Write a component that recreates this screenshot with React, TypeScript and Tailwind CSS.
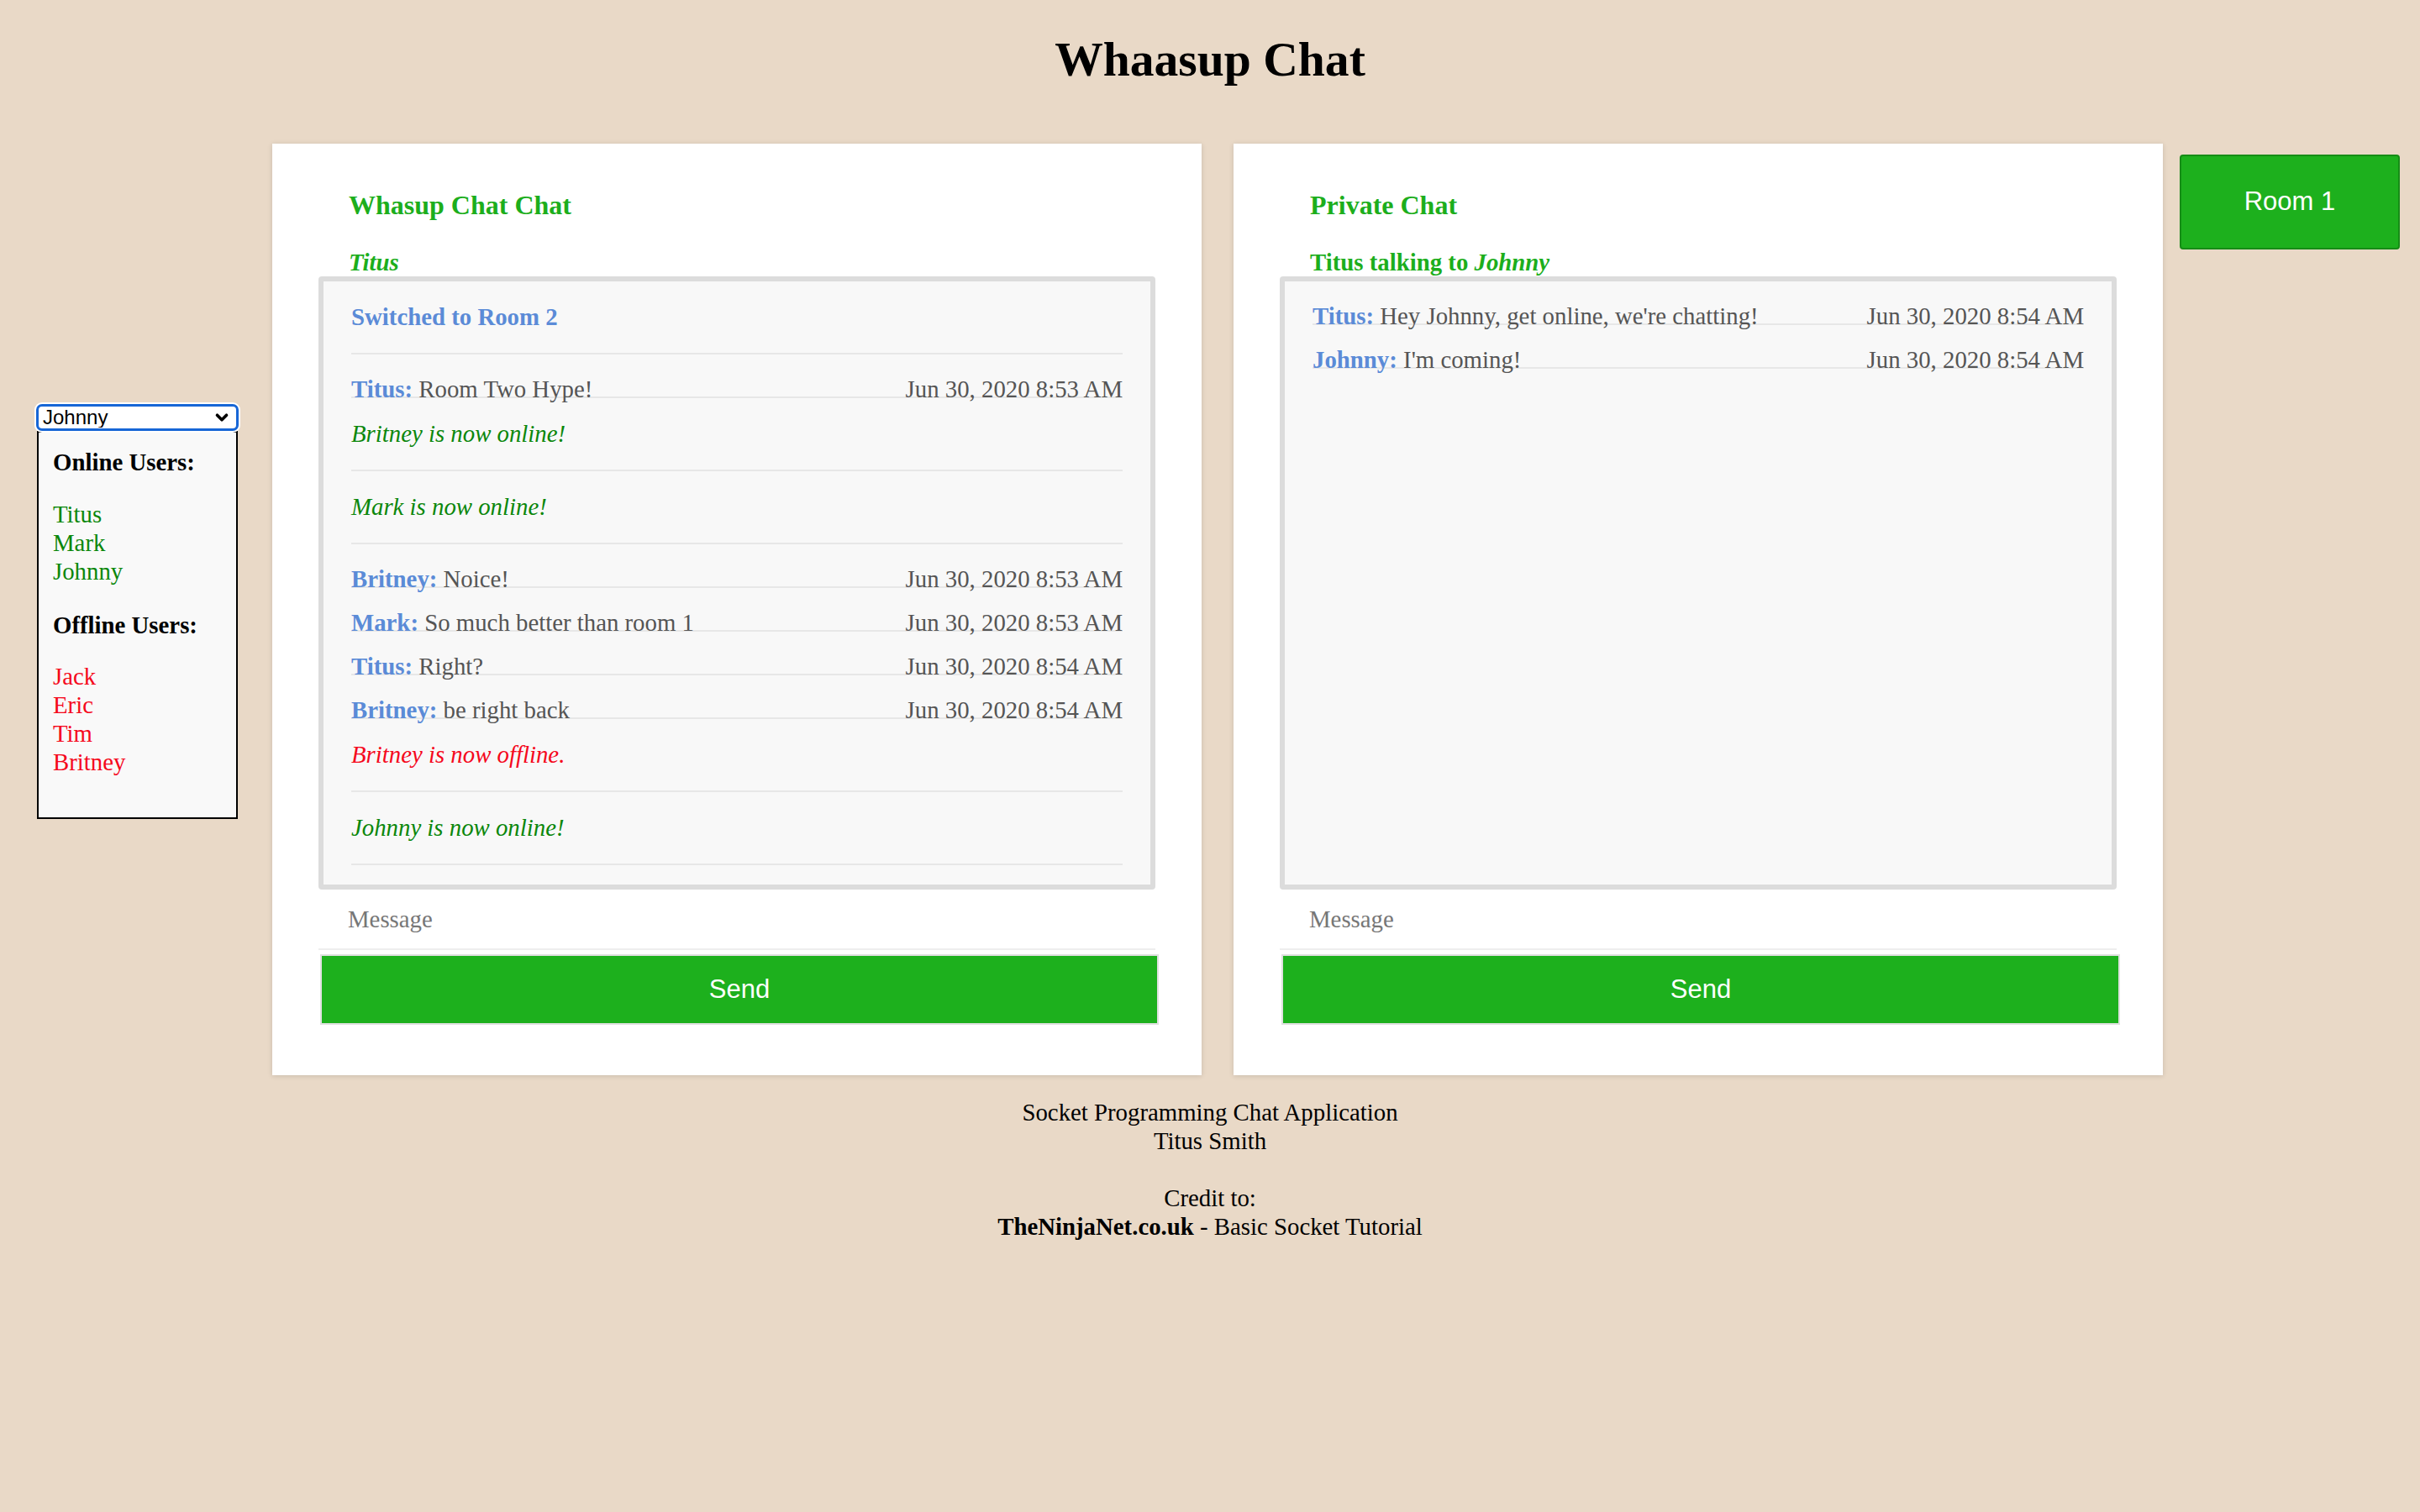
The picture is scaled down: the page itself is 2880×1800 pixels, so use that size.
import { ChevronDown } from 'lucide-react'

type Item =
  | { kind: 'msg'; name: string; text: string; time: string }
  | { kind: 'sys'; text: string; tone: 'online' | 'offline' | 'room' }

const room2: Item[] = [
  { kind: 'sys', text: 'Switched to Room 2', tone: 'room' },
  { kind: 'msg', name: 'Titus', text: 'Room Two Hype!', time: 'Jun 30, 2020 8:53 AM' },
  { kind: 'sys', text: 'Britney is now online!', tone: 'online' },
  { kind: 'sys', text: 'Mark is now online!', tone: 'online' },
  { kind: 'msg', name: 'Britney', text: 'Noice!', time: 'Jun 30, 2020 8:53 AM' },
  { kind: 'msg', name: 'Mark', text: 'So much better than room 1', time: 'Jun 30, 2020 8:53 AM' },
  { kind: 'msg', name: 'Titus', text: 'Right?', time: 'Jun 30, 2020 8:54 AM' },
  { kind: 'msg', name: 'Britney', text: 'be right back', time: 'Jun 30, 2020 8:54 AM' },
  { kind: 'sys', text: 'Britney is now offline.', tone: 'offline' },
  { kind: 'sys', text: 'Johnny is now online!', tone: 'online' },
]

const privateChat: Item[] = [
  { kind: 'msg', name: 'Titus', text: "Hey Johnny, get online, we're chatting!", time: 'Jun 30, 2020 8:54 AM' },
  { kind: 'msg', name: 'Johnny', text: "I'm coming!", time: 'Jun 30, 2020 8:54 AM' },
]

const online = ['Titus', 'Mark', 'Johnny']
const offline = ['Jack', 'Eric', 'Tim', 'Britney']

function Row({ item }: { item: Item }) {
  if (item.kind === 'msg') {
    return (
      <div className="pt-[31px]">
        <div className="flex justify-between leading-[19px] border-b-2 border-[#e7e7e7] text-[#555555]">
          <span className="relative top-[1px] whitespace-nowrap">
            <b className="text-[#5b8bd7]">{item.name}:</b> {item.text}
          </span>
          <span className="relative top-[1px] whitespace-nowrap">{item.time}</span>
        </div>
      </div>
    )
  }
  // system notices get their own divider underneath
  const tone =
    item.tone === 'room'
      ? 'font-bold text-[#5b8bd7]'
      : item.tone === 'online'
        ? 'italic text-[#0b870b]'
        : 'italic text-[#f5081c]'
  return (
    <div className="pt-[33px] pb-[33px] border-b-2 border-[#e7e7e7]">
      <p className={`leading-[19px] ${tone}`}>{item.text}</p>
    </div>
  )
}

function ChatCard({ title, sub, items }: { title: string; sub: React.ReactNode; items: Item[] }) {
  return (
    <div className="w-[1106px] bg-white shadow-[0_1px_6px_rgba(0,0,0,0.14)] px-[55px] pt-[57px] pb-[60px]">
      <h3 className="pl-[36px] text-[32px] font-bold leading-none text-[#1cae1c]">{title}</h3>
      <div className="pl-[36px] mt-[38px] text-[28.8px] font-bold leading-none text-[#1cae1c]">{sub}</div>
      <div className="mt-[3px] h-[730px] rounded-[4px] border-[6px] border-[#dcdcdc] bg-[#f8f8f8] px-[33px] overflow-hidden text-[28.8px]">
        {items.map((it, i) => (
          <Row key={i} item={it} />
        ))}
      </div>
      <input
        placeholder="Message"
        className="block w-full h-[72px] border-b-2 border-[#eeeeee] bg-white pl-[35px] text-[28.8px] outline-none placeholder:text-[#777777]"
      />
      <button className="mt-[5px] ml-[2px] block w-[calc(100%+2px)] h-[84px] border-2 border-[#e0e0e0] bg-[#1db01d] text-white text-[31px] font-['Liberation_Sans',Arial,sans-serif]">
        Send
      </button>
    </div>
  )
}

export default function App() {
  return (
    <div className="min-h-screen w-full bg-[#e9d9c7] text-black font-['Liberation_Serif','Times_New_Roman',serif]">
      <h1 className="pt-[42px] text-center text-[57.6px] font-bold leading-none">Whaasup Chat</h1>

      <div className="mt-[71px] flex items-center pl-[43px]">
        {/* user list */}
        <div className="w-[241px] mt-[6px]">
          <div className="relative h-[32px] rounded-[7px] border-[3px] border-[#1766d6] bg-white ring-2 ring-white">
            <select className="h-full w-full appearance-none bg-transparent pl-[5px] text-[24px] leading-none text-black outline-none font-['Liberation_Sans',Arial,sans-serif]">
              <option>Johnny</option>
              <option>Titus</option>
              <option>Mark</option>
            </select>
            <ChevronDown className="pointer-events-none absolute right-[6px] top-[2px] h-[22px] w-[22px] text-black" strokeWidth={4} />
          </div>
          <div className="ml-[1px] w-[239px] h-[462px] border-2 border-black bg-[#f9f9f9] pl-[17px] pt-[18px] text-[28.8px] leading-[34px]">
            <h4 className="font-bold">Online Users:</h4>
            <ul className="mt-[28px] text-[#0b870b]">
              {online.map(n => (
                <li key={n}>{n}</li>
              ))}
            </ul>
            <h4 className="mt-[30px] font-bold">Offline Users:</h4>
            <ul className="mt-[27px] text-[#f5081c]">
              {offline.map(n => (
                <li key={n}>{n}</li>
              ))}
            </ul>
          </div>
        </div>

        <div className="ml-[40px]">
          <ChatCard title="Whasup Chat Chat" sub={<i>Titus</i>} items={room2} />
        </div>
        <div className="ml-[38px]">
          <ChatCard
            title="Private Chat"
            sub={
              <>
                Titus talking to <i>Johnny</i>
              </>
            }
            items={privateChat}
          />
        </div>

        <button className="self-start mt-[13px] ml-[20px] w-[262px] h-[113px] rounded-[4px] border-2 border-[#168c16] bg-[#1db01d] text-white text-[31px] font-['Liberation_Sans',Arial,sans-serif]">
          Room 1
        </button>
      </div>

      <footer className="mt-[27px] text-center text-[28.8px] leading-[34px]">
        <p>Socket Programming Chat Application</p>
        <p>Titus Smith</p>
        <br />
        <p>Credit to:</p>
        <p>
          <b>TheNinjaNet.co.uk</b> - Basic Socket Tutorial
        </p>
      </footer>
    </div>
  )
}
